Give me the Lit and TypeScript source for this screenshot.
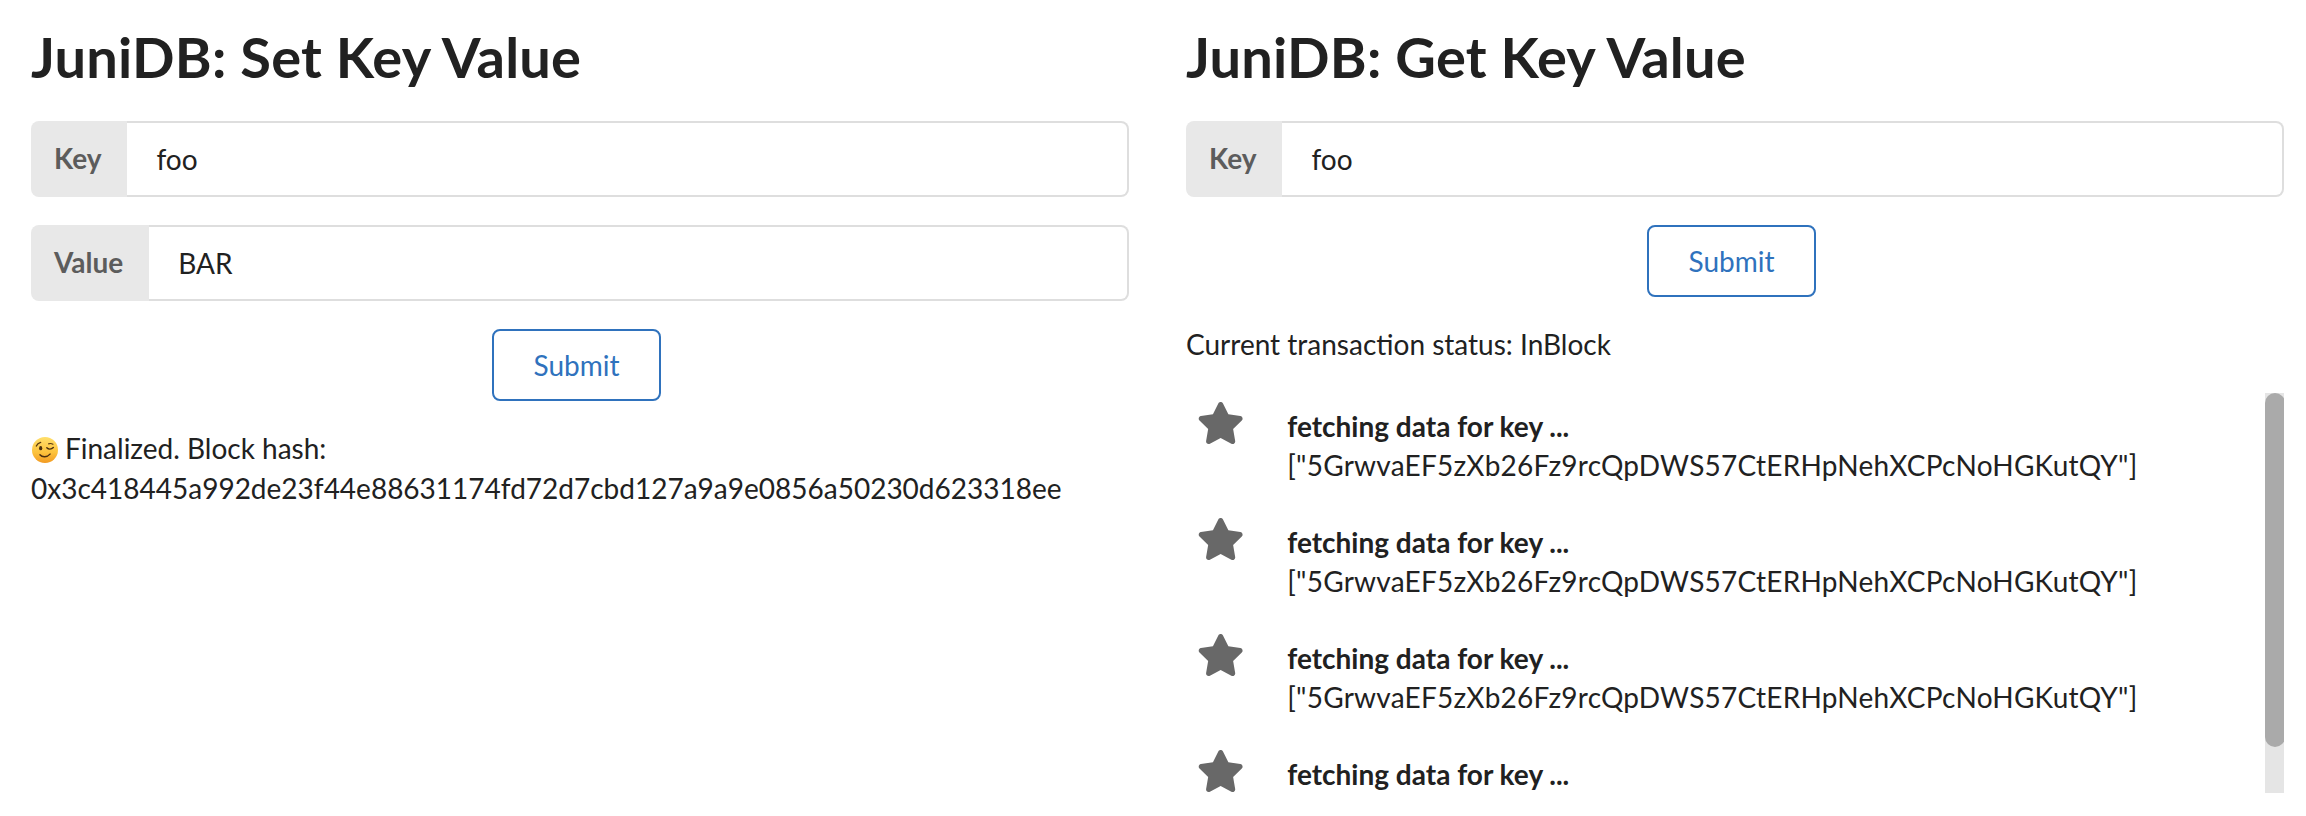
import { LitElement, html, css, svg } from "lit";
import { customElement } from "lit/decorators.js";

const STAR = "M259.3 17.8L194 150.2 47.9 171.5c-26.2 3.8-36.7 36.1-17.7 54.6l105.7 103-25 145.5c-4.5 26.3 23.2 46 46.4 33.7L288 439.6l130.7 68.7c23.2 12.2 50.9-7.4 46.4-33.7l-25-145.5 105.7-103c19-18.5 8.5-50.8-17.7-54.6L382 150.2 316.7 17.8c-11.7-23.6-45.6-23.9-57.4 0z";
const ADDRESS = '["5GrwvaEF5zXb26Fz9rcQpDWS57CtERHpNehXCPcNoHGKutQY"]';

const wink = svg`<svg class="emoji" viewBox="0 0 36 36" aria-hidden="true">
  <defs><linearGradient id="g" x1="0" y1="0" x2="0" y2="1"><stop offset="0" stop-color="#ffdf6b"/><stop offset="0.6" stop-color="#fcc23c"/><stop offset="1" stop-color="#f29a22"/></linearGradient></defs>
  <circle cx="18" cy="18" r="18" fill="url(#g)"/>
  <path d="M6 12.5c1-2.6 3-4.3 6-5" fill="none" stroke="#5a3a12" stroke-width="1.8" stroke-linecap="round"/>
  <ellipse cx="12" cy="15.5" rx="2.2" ry="3" fill="#4a3010"/>
  <path d="M20.5 15c2.5 2.5 6 2.5 9-.5" fill="none" stroke="#4a3010" stroke-width="2" stroke-linecap="round"/>
  <path d="M23 9.5c2-.8 4-.6 6 .5" fill="none" stroke="#5a3a12" stroke-width="1.6" stroke-linecap="round"/>
  <path d="M11 24.5c3 3.8 10 3.8 14 -.8" fill="none" stroke="#4a3010" stroke-width="2" stroke-linecap="round"/>
</svg>`;

@customElement("app-root")
export class AppRoot extends LitElement {
  static styles = css`
    :host {
      display: grid;
      grid-template-columns: 1fr 1fr;
      column-gap: 57px;
      padding: 0 22px 0 31px;
      height: 816px;
      box-sizing: border-box;
      overflow: hidden;
      background: #fff;
      color: #212121;
      font-family: Lato, "Helvetica Neue", Arial, sans-serif;
      font-size: 28px;
      line-height: 39.2px;
    }
    .col { min-width: 0; display: flex; flex-direction: column; gap: 28px; padding-top: 21px; }
    h1 { margin: 0; font-size: 56px; line-height: 72px; font-weight: 700; letter-spacing: 0.2px; }
    .field { display: flex; height: 76px; }
    .field label {
      display: flex; align-items: center; padding: 0 26px 0 23px;
      background: #e8e8e8; color: #5c5c5c; font-weight: 700;
      border-radius: 8px 0 0 8px;
    }
    .field input {
      flex: 1; min-width: 0; box-sizing: border-box; padding: 2px 28px 0 29px;
      border: 2px solid #dedede; border-left: 0; border-radius: 0 8px 8px 0;
      font: inherit; color: #212121; background: #fff; outline: none;
    }
    .actions { display: flex; justify-content: center; }
    .submit {
      width: 169px; height: 72px; box-sizing: border-box; padding: 2px 0 0; margin-right: 7px;
      background: #fff; border: 2px solid #2f72bd; border-radius: 8px;
      color: #2f72bd; font: inherit;
    }
    .result { margin: -1px 0 1px; line-height: 40px; }
    .emoji { width: 26px; height: 26px; vertical-align: -4px; margin: 0 7px 0 1px; }
    .list { position: relative; height: 400px; overflow: hidden; }
    .items { display: flex; flex-direction: column; gap: 32.6px; padding: 9px 0; }
    .item { display: flex; }
    .star { width: 47.3px; height: 42px; margin-left: 11px; fill: #686868; flex: none; }
    .text { margin-left: 43px; padding-top: 5px; }
    .text b { display: block; font-weight: 700; }
    .addr { letter-spacing: 0.23px; }
    .track { position: absolute; top: 0; right: -1px; bottom: 0; width: 20px; background: #e5e5e5; }
    .thumb { height: 354px; background: #aaa; border-radius: 10px; }
  `;

  render() {
    return html`
      <section class="col">
        <h1>JuniDB: Set Key Value</h1>
        <div class="field"><label>Key</label><input value="foo" /></div>
        <div class="field"><label>Value</label><input value="BAR" /></div>
        <div class="actions"><button class="submit">Submit</button></div>
        <p class="result">${wink}Finalized. Block hash:<br />0x3c418445a992de23f44e88631174fd72d7cbd127a9a9e0856a50230d623318ee</p>
      </section>
      <section class="col">
        <h1>JuniDB: Get Key Value</h1>
        <div class="field"><label>Key</label><input value="foo" /></div>
        <div class="actions"><button class="submit">Submit</button></div>
        <p class="result">Current transaction status: InBlock</p>
        <div class="list">
          <div class="items">
            ${[0, 1, 2, 3].map(
              () => html`<div class="item">
                <svg class="star" viewBox="0 0 576 512"><path d="${STAR}"></path></svg>
                <div class="text"><b>fetching data for key ...</b><span class="addr">${ADDRESS}</span></div>
              </div>`
            )}
          </div>
          <div class="track"><div class="thumb"></div></div>
        </div>
      </section>
    `;
  }
}
